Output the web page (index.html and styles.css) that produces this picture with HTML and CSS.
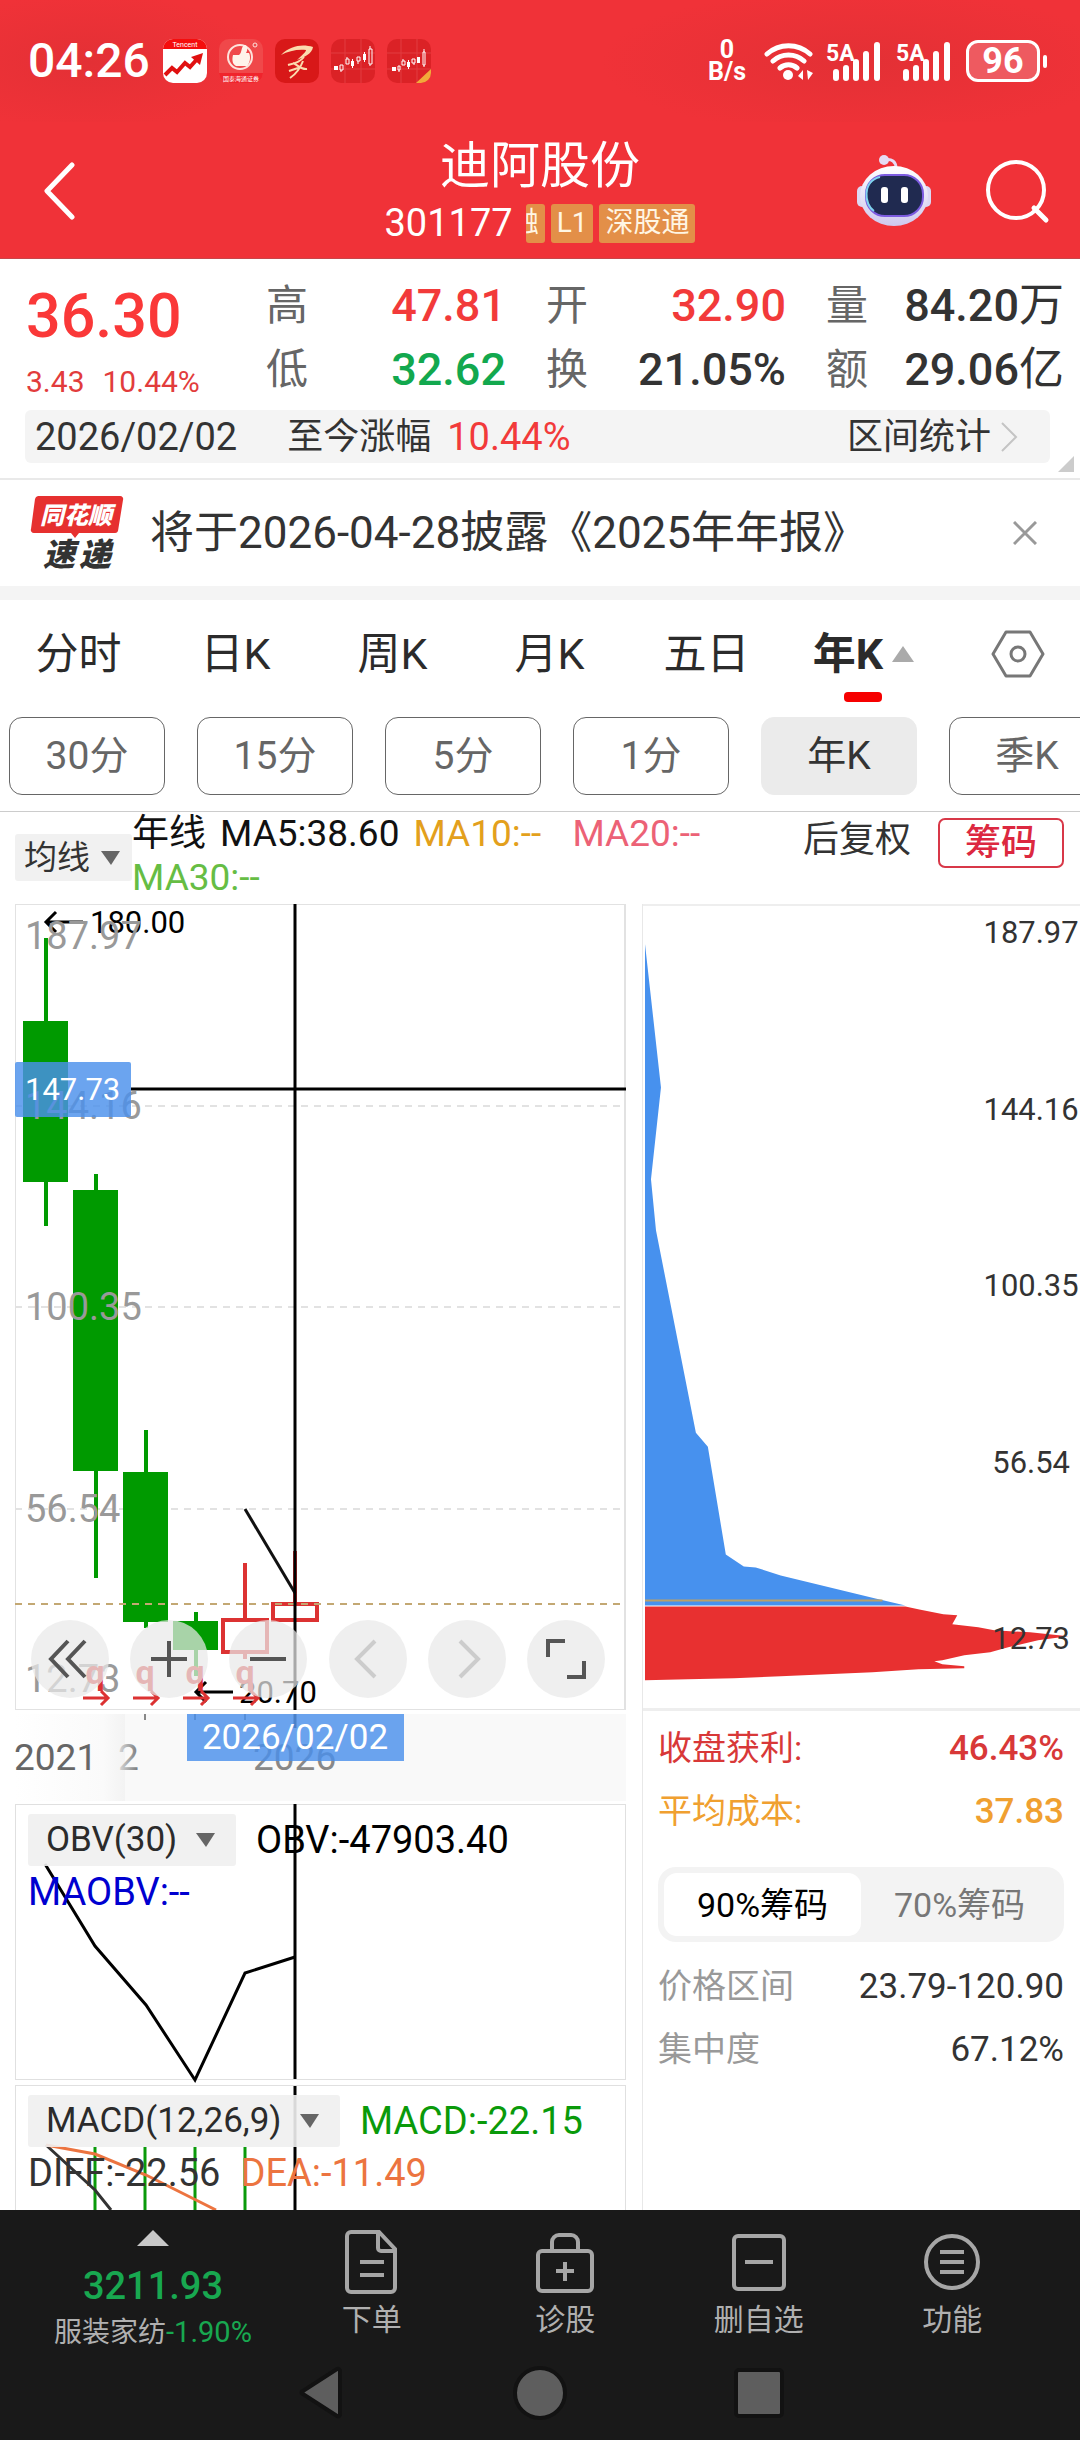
FILE: index.html
```html
<!DOCTYPE html>
<html lang="zh-CN">
<head>
<meta charset="utf-8">
<meta name="viewport" content="width=device-width, initial-scale=1">
<title>迪阿股份 301177</title>
<link rel="stylesheet" href="styles.css">
</head>
<body>
<header class="top">
  <div class="status">
    <time class="clock">04:26</time>
    <div class="apps">
      <svg class="app" viewBox="0 0 44 44" aria-hidden="true">
        <rect width="44" height="44" rx="10" fill="#fff"/>
        <path d="M0 10a10 10 0 0 1 10-10h24a10 10 0 0 1 10 10z" fill="#f50d0d"/>
        <text x="22" y="8" text-anchor="middle" font-size="7" fill="#fff">Tencent</text>
        <path d="M2 36l7-7 5 4 8-9 5 4 9-10" fill="none" stroke="#e01010" stroke-width="4"/>
        <path d="M28 18l12-4-3 12z" fill="#e01010"/>
      </svg>
      <svg class="app" viewBox="0 0 44 44" aria-hidden="true">
        <rect width="44" height="44" rx="10" fill="#f0484a"/>
        <path d="M0 34h44a10 10 0 0 1-10 10H10A10 10 0 0 1 0 34z" fill="#f0242c"/>
        <circle cx="21" cy="18" r="12" fill="none" stroke="#fde3dc" stroke-width="2"/>
        <path d="M14 16h6c3-2 2-8 5-10 4-1 4 5 2 8h3c2 4 1 10-2 13H17c-4-2-4-7-3-11z" fill="#fff3ea"/>
        <circle cx="36" cy="6" r="2" fill="none" stroke="#fde3dc" stroke-width="1"/>
        <text x="22" y="42" text-anchor="middle" font-size="6" fill="#fff">国泰海通证券</text>
      </svg>
      <svg class="app" viewBox="0 0 44 44" aria-hidden="true">
        <rect width="44" height="44" rx="10" fill="#d81818"/>
        <path d="M6 16c10-10 22-11 32-8-1 7-9 10-16 13 6-6 9-8 9-10-8-1-18 1-25 5z" fill="#fbdcae"/>
        <path d="M13 26c7-2 12-3 16-8M14 32l12-4M28 22c-3 8-7 13-13 17M18 24c5 2 8 7 14 6" fill="none" stroke="#fbdcae" stroke-width="2"/>
      </svg>
      <svg class="app" viewBox="0 0 44 44" aria-hidden="true">
        <rect width="44" height="44" rx="10" fill="#db2226"/>
        <path d="M0 14h44M0 30h44M14 0v44M30 0v44" stroke="#e23c40"/>
        <g fill="#fff"><path d="M3 27h4v4H3zM20 22h3v5h-3zM32 15h3v6h-3zM21 20h1v9h-1zM33 13h1v10h-1z"/></g>
        <g fill="none" stroke="#fff"><path d="M9 26h3v5H9zM15 20h3v5h-3zM26 18h3v4h-3zM38 10h3v15h-3zM10 31v2M16 18v2M27 22v3M39 7v3M39 25v2"/></g>
      </svg>
      <svg class="app" viewBox="0 0 44 44" aria-hidden="true">
        <rect width="44" height="44" rx="10" fill="#db2226"/>
        <path d="M0 14h44M0 30h44M14 0v44M30 0v44" stroke="#e23c40"/>
        <g fill="#fff"><path d="M5 28h4v4H5zM20 23h3v5h-3zM30 18h3v6h-3zM21 21h1v9h-1z"/></g>
        <g fill="none" stroke="#fff"><path d="M11 27h2v4h-2zM15 22h3v4h-3zM25 20h3v4h-3zM36 13h2v13h-2zM12 31v2M16 20v2M27 24v2M37 10v3M37 26v2"/></g>
        <path d="M44 30v4a10 10 0 0 1-10 10h-5z" fill="#f2a93a"/>
      </svg>
    </div>
    <div class="rate"><span>0</span><span>B/s</span></div>
    <svg class="wifi" viewBox="0 0 50 40" aria-hidden="true">
      <g fill="none" stroke="#fff" stroke-width="5" stroke-linecap="round">
        <path d="M3 13a32 32 0 0 1 43 0M9 20a23 23 0 0 1 31 0M16 27a13 13 0 0 1 17 0"/>
      </g>
      <circle cx="24" cy="34" r="5" fill="#fff"/>
      <path d="M34 35l5-6v10zM43 29l6 3-5 7z" fill="#fff"/>
    </svg>
    <svg class="signal" viewBox="0 0 56 40" aria-hidden="true">
      <text x="0" y="20" font-size="23" font-weight="700" fill="#fff">5A</text>
      <path d="M10 31v6M20 27v10M30 21v16M40 13v24M51 4v33" stroke="#fff" stroke-width="6" stroke-linecap="round"/>
    </svg>
    <svg class="signal" viewBox="0 0 56 40" aria-hidden="true">
      <text x="0" y="20" font-size="23" font-weight="700" fill="#fff">5A</text>
      <path d="M10 31v6M20 27v10M30 21v16M40 13v24M51 4v33" stroke="#fff" stroke-width="6" stroke-linecap="round"/>
    </svg>
    <div class="battery"><span>96</span><i></i></div>
  </div>
  <div class="titlebar">
    <button class="back" aria-label="返回"><svg viewBox="0 0 32 58"><path d="M29 3L4 29l25 26" fill="none" stroke="#fff" stroke-width="5" stroke-linecap="round" stroke-linejoin="round"/></svg></button>
    <div class="name">
      <h1>迪阿股份</h1>
      <div class="code"><span>301177</span><div class="badges"><b class="cut"><span>融</span></b><b>L1</b><b>深股通</b></div></div>
    </div>
    <div class="tools">
      <button aria-label="助手"><svg width="76" height="72" viewBox="0 0 76 72">
        <defs><linearGradient id="rb" x1="0" y1="0" x2="0" y2="1"><stop offset="0" stop-color="#fff"/><stop offset="1" stop-color="#cfc8ee"/></linearGradient></defs>
        <circle cx="28" cy="5" r="5" fill="#e6dcf4"/><path d="M28 5c8-2 12 2 12 8" fill="none" stroke="#e6dcf4" stroke-width="3"/>
        <rect x="1" y="31" width="10" height="21" rx="5" fill="#dcd8f4"/><rect x="65" y="31" width="10" height="21" rx="5" fill="#dcd8f4"/>
        <ellipse cx="38" cy="41" rx="34" ry="30" fill="url(#rb)"/>
        <rect x="10" y="20" width="57" height="41" rx="19" fill="#202a50" stroke="#7c5be0" stroke-width="2"/>
        <path d="M24 22c-18 4-16 28-6 34" fill="none" stroke="#7fd4ee" stroke-width="2"/>
        <rect x="25" y="32" width="7" height="16" rx="3" fill="#fff"/><rect x="45" y="32" width="7" height="16" rx="3" fill="#fff"/>
      </svg></button>
      <button aria-label="搜索"><svg width="66" height="66" viewBox="0 0 66 66"><circle cx="32" cy="32" r="28" fill="none" stroke="#fff" stroke-width="4"/><path d="M50 50l12 12" stroke="#fff" stroke-width="5" stroke-linecap="round"/></svg></button>
    </div>
  </div>
</header>

<section class="quote">
  <div class="figures">
    <div class="price"><strong>36.30</strong><p><span>3.43</span><span>10.44%</span></p></div>
    <dl>
      <div><dt>高</dt><dd class="up">47.81</dd></div>
      <div><dt>开</dt><dd class="up">32.90</dd></div>
      <div><dt>量</dt><dd>84.20<span>万</span></dd></div>
      <div><dt>低</dt><dd class="down">32.62</dd></div>
      <div><dt>换</dt><dd>21.05%</dd></div>
      <div><dt>额</dt><dd>29.06<span>亿</span></dd></div>
    </dl>
  </div>
  <div class="period">
    <span class="num">2026/02/02</span>
    <span class="since">至今涨幅</span>
    <span class="num up">10.44%</span>
    <button>区间统计<svg width="18" height="32" viewBox="0 0 18 32"><path d="M2 2l14 14L2 30" fill="none" stroke="#c4c4c4" stroke-width="2"/></svg></button>
  </div>
  <svg class="corner" width="16" height="16" viewBox="0 0 16 16" aria-hidden="true"><path d="M16 0v16H0z" fill="#ccc"/></svg>
</section>

<section class="notice">
  <div class="brand">
    <svg viewBox="0 0 94 44" aria-hidden="true"><path d="M8 1h82a3 3 0 0 1 3 4l-5 31a3 3 0 0 1-3 2H49l-4 5-4-5H4a3 3 0 0 1-3-4L5 4a4 4 0 0 1 3-3z" fill="#e6302f"/><text x="46" y="29" text-anchor="middle" font-size="24" font-style="italic" font-weight="900" fill="#fff">同花顺</text></svg>
    <p><span>速</span><span>递</span></p>
  </div>
  <a href="#report">将于2026-04-28披露《2025年年报》</a>
  <button aria-label="关闭"><svg width="24" height="24" viewBox="0 0 24 24"><path d="M1 1l22 22M23 1L1 23" stroke="#999" stroke-width="3"/></svg></button>
</section>

<nav class="tabs">
  <button>分时</button><button>日K</button><button>周K</button><button>月K</button><button>五日</button>
  <button class="on">年K<svg width="22" height="16" viewBox="0 0 22 16"><path d="M11 0l11 16H0z" fill="#aaa"/></svg></button>
  <button class="settings" aria-label="设置"><svg width="54" height="48" viewBox="0 0 54 48"><path d="M15 2h24l13 22-13 22H15L2 24z" fill="none" stroke="#777" stroke-width="3" stroke-linejoin="round"/><circle cx="27" cy="24" r="7" fill="none" stroke="#777" stroke-width="3"/></svg></button>
</nav>
<div class="scales">
  <button>30分</button><button>15分</button><button>5分</button><button>1分</button><button class="on">年K</button><button>季K</button>
</div>

<div class="averages">
  <label class="pick"><select aria-label="主图指标"><option>均线</option></select><svg width="19" height="14" viewBox="0 0 19 14"><path d="M0 0h19l-9 14z" fill="#666"/></svg></label>
  <p><span>年线</span><span>MA5:38.60</span><span class="ma ma10">MA10:--</span><span class="ma ma20">MA20:--</span><span class="ma ma30">MA30:--</span></p>
  <button class="plain">后复权</button>
  <button class="chip">筹码</button>
</div>

<main class="charts">
  <div class="left">
    <div class="kline">
      <svg viewBox="15 904 611 806">
        <rect x="15" y="904" width="610" height="806" fill="none" stroke="#e2e2e2" stroke-width="2"/>
        <g stroke="#e2e2e2" stroke-width="2" stroke-dasharray="7 6"><path d="M15 1106h611M15 1307h611M15 1509h611"/></g>
        <g fill="#009a00">
          <path d="M44 938h4v288h-4zM23 1021h45v161H23z"/>
          <path d="M94 1174h4v404h-4zM73 1190h45v281H73z"/>
          <path d="M144 1430h4v198h-4zM123 1472h45v150h-45z"/>
          <path d="M194 1612h4v64h-4zM173 1621h45v29h-45z"/>
        </g>
        <g fill="none" stroke="#dc3232">
          <path d="M223 1620h44v32h-44z" stroke-width="4"/><path d="M245 1563v55M245 1653v6M295 1551v52" stroke-width="4"/>
          <path d="M273 1604h44v16h-44z" stroke-width="4"/>
        </g>
        <path d="M15 1604h611" stroke="#c3a873" stroke-width="2" stroke-dasharray="7 6"/>
        <path d="M245 1509l50 84" stroke="#111" stroke-width="3"/>
        <path d="M46 922h37M56 912l-10 10 10 10" fill="none" stroke="#000" stroke-width="3"/>
        <text x="90" y="933" class="mark">180.00</text>
        <path d="M196 1692h37M206 1682l-10 10 10 10" fill="none" stroke="#000" stroke-width="3"/>
        <text x="239" y="1703" class="mark">20.70</text>
        <g class="scale"><text x="25" y="949">187.97</text><text x="25" y="1119">144.16</text><text x="25" y="1320">100.35</text><text x="25" y="1522">56.54</text><text x="25" y="1692">12.73</text></g>
        <g class="event"><text x="95" y="1684">q</text><text x="145" y="1684">q</text><text x="195" y="1684">q</text><text x="245" y="1684">q</text></g>
        <path d="M83 1698h25M101 1691l7 7-7 7M133 1698h25M151 1691l7 7-7 7M183 1698h25M201 1691l7 7-7 7M233 1698h25M251 1691l7 7-7 7" fill="none" stroke="#dc3232" stroke-width="3"/>
        <path d="M295 904v806M131 1089h495" stroke="#000" stroke-width="3"/>
        <rect x="15" y="1062" width="116" height="55" rx="2" fill="#4a90eb" fill-opacity=".82"/>
        <text x="25" y="1100" class="cursor">147.73</text>
      </svg>
      <div class="controls">
        <button aria-label="最早"><svg viewBox="0 0 78 78"><path d="M37 21L20 39l17 18M54 21L37 39l17 18"/></svg></button>
        <button aria-label="放大"><svg viewBox="0 0 78 78"><path d="M39 21v36M21 39h36"/></svg></button>
        <button aria-label="缩小"><svg viewBox="0 0 78 78"><path d="M21 39h36"/></svg></button>
        <button aria-label="前一根" disabled><svg viewBox="0 0 78 78"><path d="M46 21L28 39l18 18"/></svg></button>
        <button aria-label="后一根" disabled><svg viewBox="0 0 78 78"><path d="M32 21l18 18-18 18"/></svg></button>
        <button aria-label="全屏"><svg viewBox="0 0 78 78"><path d="M21 37V21h17M57 41v16H40"/></svg></button>
      </div>
    </div>
    <svg class="years" viewBox="15 1710 611 94">
      <defs><linearGradient id="fade"><stop offset="0" stop-color="#fff"/><stop offset=".8" stop-color="#fafafa"/><stop offset="1" stop-color="#f3f3f3"/></linearGradient>
      <linearGradient id="ink"><stop offset="0" stop-color="#ddd"/><stop offset="1" stop-color="#777"/></linearGradient></defs>
      <rect x="125" y="1714" width="501" height="87" fill="#f9f9f9"/>
      <rect x="15" y="1714" width="110" height="87" fill="url(#fade)"/>
      <path d="M145 1714v6M195 1714v6M245 1714v6" stroke="#888" stroke-width="2"/>
      <text x="14" y="1770" fill="#666">2021</text><text x="118" y="1770" fill="url(#ink)">2</text><text x="253" y="1770" fill="#888">2026</text>
      <rect x="187" y="1714" width="217" height="47" fill="#4a90eb" fill-opacity=".82"/>
      <path d="M295 1714v14" stroke="#4a80c8" stroke-width="3"/>
      <text x="295" y="1749" text-anchor="middle" class="date">2026/02/02</text>
    </svg>
    <div class="sub obv">
      <svg viewBox="15 1804 611 275"><path d="M45 1864l50 82 51 59 49 75 50-107 50-16" fill="none" stroke="#000" stroke-width="3"/><path d="M295 1804v275" stroke="#000" stroke-width="3"/></svg>
      <div class="legend">
        <label class="pick"><select aria-label="副图指标一"><option>OBV(30)</option></select><svg width="19" height="14" viewBox="0 0 19 14"><path d="M0 0h19l-9 14z" fill="#666"/></svg></label>
        <span>OBV:-47903.40</span>
      </div>
      <div class="legend"><span class="blue">MAOBV:--</span></div>
    </div>
    <div class="sub macd">
      <svg viewBox="15 2085 611 125">
        <path d="M95 2147v63M145 2147v63M195 2147v63M245 2147v63" stroke="#0a9a0a" stroke-width="3"/>
        <path d="M46 2145l49 45 16 20" fill="none" stroke="#333" stroke-width="3"/>
        <path d="M46 2145l49 9 51 21 50 25 20 10" fill="none" stroke="#ec7440" stroke-width="3"/>
        <path d="M295 2085v125" stroke="#000" stroke-width="3"/>
      </svg>
      <div class="legend">
        <label class="pick"><select aria-label="副图指标二"><option>MACD(12,26,9)</option></select><svg width="19" height="14" viewBox="0 0 19 14"><path d="M0 0h19l-9 14z" fill="#666"/></svg></label>
        <span class="green">MACD:-22.15</span>
      </div>
      <div class="legend"><span class="ink">DIFF:-22.56</span><span class="orange">DEA:-11.49</span></div>
    </div>
  </div>

  <aside class="chips">
    <svg viewBox="642 904 438 806">
      <path d="M642 905h438" stroke="#eee" stroke-width="2"/>
      <path d="M644 944l16 144-10 92 5 51 40 203 12 14 18 108 18 12 12 1 25 8 95 23 30 7H644z" fill="#4791ee"/>
      <path d="M644 1602h238" stroke="#b9a06a" stroke-width="2"/>
      <path d="M644 1608h261l14 3 24 5 14 1-5 9 26 3 16 3 36 2 38 4-30 4-30 7-18 5-26 3-22 5-8 1 8 3 22 2v2l-46 1-46 3-46 2-46 2-47 2-46 1-43 1z" fill="#e83030"/>
      <g class="axis"><text x="1031" y="943">187.97</text><text x="1031" y="1120">144.16</text><text x="1031" y="1297">100.35</text><text x="1031" y="1474">56.54</text><text x="1031" y="1651">12.73</text></g>
    </svg>
    <div class="detail">
      <p class="red"><span>收盘获利:</span><b>46.43%</b></p>
      <p class="amber"><span>平均成本:</span><b>37.83</b></p>
      <div class="segment"><button class="on">90%筹码</button><button>70%筹码</button></div>
      <p class="grey"><span>价格区间</span><b>23.79-120.90</b></p>
      <p class="grey"><span>集中度</span><b>67.12%</b></p>
    </div>
  </aside>
</main>

<footer class="bottom">
  <nav class="actions">
    <a href="#sector" class="index"><svg width="32" height="16" viewBox="0 0 32 16"><path d="M16 0l16 16H0z" fill="#c8c8c8"/></svg><strong>3211.93</strong><span>服装家纺<em>-1.90%</em></span></a>
    <button><svg viewBox="0 0 64 64"><path d="M11 2h28l16 17v39a4 4 0 0 1-4 4H11a4 4 0 0 1-4-4V6a4 4 0 0 1 4-4zM38 3v15a3 3 0 0 0 3 3h13M20 32h24M20 45h24"/></svg>下单</button>
    <button><svg viewBox="0 0 64 64"><path d="M9 21h46a4 4 0 0 1 4 4v32a4 4 0 0 1-4 4H9a4 4 0 0 1-4-4V25a4 4 0 0 1 4-4zM19 21v-9a7 7 0 0 1 7-7h12a7 7 0 0 1 7 7v9M32 32v19M23 41h18"/></svg>诊股</button>
    <button><svg viewBox="0 0 64 64"><path d="M11 6h42a4 4 0 0 1 4 4v45a4 4 0 0 1-4 4H11a4 4 0 0 1-4-4V10a4 4 0 0 1 4-4zM18 32h28"/></svg>删自选</button>
    <button><svg viewBox="0 0 64 64"><circle cx="32" cy="32" r="26"/><path d="M20 22h24M20 32h24M20 42h24"/></svg>功能</button>
  </nav>
  <div class="system">
    <button aria-label="后退"><svg width="50" height="60" viewBox="0 0 50 60"><path d="M44 8v44a2 2 0 0 1-3 1L7 31a1 1 0 0 1 0-3L41 6a2 2 0 0 1 3 2z"/></svg></button>
    <button aria-label="主屏幕"><svg width="60" height="60" viewBox="0 0 60 60"><circle cx="30" cy="30" r="25"/></svg></button>
    <button aria-label="最近任务"><svg width="60" height="60" viewBox="0 0 60 60"><rect x="7" y="7" width="46" height="46" rx="3"/></svg></button>
  </div>
</footer>
</body>
</html>
```
FILE: styles.css
```css
* { box-sizing: border-box; }
body {
  margin: 0;
  background: #fff;
  color: #333;
  font-family: Roboto, "Noto Sans CJK SC", sans-serif;
  font-size: 36px;
  line-height: 44px;
  overflow-x: hidden;
}
h1, p, dl, dd { margin: 0; }
svg { display: block; flex: none; }
button, select { font: inherit; color: inherit; background: none; border: 0; padding: 0; margin: 0; }
select { appearance: none; }
a { color: inherit; text-decoration: none; }
em, i { font-style: normal; }
.up { color: #f23a3a; }
.down { color: #12a84e; }

/* status bar and title */
.top { background: #f03238; color: #fff; height: 259px; display: flex; flex-direction: column; border-bottom: 1px solid #c8464a; }
.status {
  display: flex; align-items: center; height: 122px; padding: 0 33px 0 28px;
  background:
    radial-gradient(ellipse 170px 70px at 90px 62px, #e33035, transparent),
    radial-gradient(ellipse 260px 74px at 860px 62px, #e33035, transparent);
}
.clock { font-size: 48px; font-weight: 500; }
.apps { display: flex; gap: 12px; margin: 0 auto 0 13px; }
.app { width: 44px; height: 44px; }
.rate { display: flex; flex-direction: column; align-items: center; font-size: 25px; font-weight: 700; line-height: 22px; margin-right: 18px; }
.wifi { width: 50px; height: 40px; margin-right: 12px; }
.signal { width: 56px; height: 40px; margin-right: 14px; overflow: visible; }
.battery { display: flex; align-items: center; gap: 3px; }
.battery span { width: 74px; height: 42px; border: 3px solid #fff; border-radius: 12px; background: #ee5a60; font-size: 36px; line-height: 36px; font-weight: 700; text-align: center; }
.battery i { width: 4px; height: 13px; border-radius: 2px; background: #fff; }
.titlebar { display: grid; grid-template-columns: 1fr auto 1fr; align-items: center; flex: 1; padding: 2px 30px 0; }
.back { justify-self: start; margin-left: 13px; }
.back svg { width: 32px; height: 58px; }
.name { display: flex; flex-direction: column; align-items: center; }
h1 { font-size: 50px; font-weight: 400; line-height: 64px; }
.code { display: flex; align-items: center; gap: 13px; font-size: 38px; line-height: 50px; }
.badges { display: flex; gap: 6px; }
.badges b { display: block; height: 39px; padding: 0 6px; border-radius: 3px; background: #e38f48; color: #fff6e4; font-size: 28px; font-weight: 400; line-height: 38px; }
.badges .cut { width: 19px; padding: 0; overflow: hidden; display: flex; justify-content: flex-end; }
.badges .cut span { margin-right: 6px; }
.tools { display: flex; align-items: center; gap: 52px; justify-self: end; }

/* price block */
.quote { position: relative; padding: 15px 16px; border-bottom: 2px solid #e9e9e9; }
.figures { display: grid; grid-template-columns: 240px 1fr; height: 128px; }
.price { padding: 6px 0 0 10px; color: #fa3838; }
.price strong { display: block; font-size: 61px; font-weight: 500; line-height: 72px; }
.price p { display: flex; gap: 18px; font-size: 30px; line-height: 36px; margin-top: 12px; color: #e23c3c; }
dl { display: grid; grid-template-columns: 240px 240px 1fr; column-gap: 40px; padding-left: 10px; }
dl div { display: flex; justify-content: space-between; align-items: center; line-height: 64px; height: 64px; }
dt { font-size: 42px; color: #666; }
dd { font-size: 45px; font-weight: 500; white-space: nowrap; }
dd span { font-weight: 400; }
.period { display: flex; align-items: center; height: 53px; margin: 8px 14px 0 9px; padding: 0 32px 0 10px; border-radius: 6px; background: #f4f4f4; }
.num { font-size: 38px; }
.since { margin: 0 16px 0 50px; }
.period button { display: flex; align-items: center; gap: 9px; margin-left: auto; }
.corner { position: absolute; right: 6px; bottom: 6px; }

/* announcement */
.notice { display: flex; align-items: center; height: 120px; padding: 0 43px 0 30px; border-bottom: 14px solid #f4f4f4; }
.brand { width: 94px; }
.brand p { display: flex; justify-content: center; gap: 4px; font-size: 32px; font-style: italic; font-weight: 900; line-height: 32px; }
.notice a { font-size: 44px; margin-left: 26px; white-space: nowrap; }
.notice button { margin-left: auto; }

/* period tabs */
.tabs { display: grid; grid-template-columns: repeat(6, 1fr) 138px; align-items: center; height: 108px; font-size: 43px; color: #2b2b2b; }
.tabs button { display: flex; align-items: center; justify-content: center; gap: 9px; position: relative; height: 100px; }
.tabs .on { font-weight: 700; }
.tabs .on::after { content: ""; position: absolute; left: calc(50% - 20px); bottom: 2px; width: 38px; height: 10px; border-radius: 4px; background: #f60000; }
.tabs .settings { justify-content: flex-end; padding-right: 35px; }
.scales { display: flex; gap: 32px; padding: 9px 0 16px 9px; overflow: hidden; border-bottom: 1px solid #ccc; }
.scales button { flex: none; width: 156px; height: 78px; border: 1px solid #666; border-radius: 13px; font-size: 39px; color: #666; }
.scales .on { background: #ebebeb; border-color: #ebebeb; color: #333; }

/* moving averages */
.averages { display: flex; align-items: flex-start; height: 92px; padding-right: 16px; padding-left: 15px; }
.pick { display: flex; align-items: center; background: #f0f0f0e6; border-radius: 3px; }
.averages .pick { height: 47px; margin-top: 22px; padding: 0 12px 0 9px; gap: 11px; font-size: 33px; }
.averages p { display: flex; flex-wrap: wrap; align-content: flex-start; column-gap: 14px; flex: 1; color: #111; font-size: 37px; }
.ma { min-width: 145px; }
.ma10 { color: #e3a01c; }
.ma20 { color: #ec6276; }
.ma30 { color: #66bd44; }
.plain { margin: 6px 27px 0 0; }
.chip { width: 126px; height: 50px; margin-top: 6px; border: 2px solid #d83848; border-radius: 7px; color: #dc2840; font-weight: 500; }

/* charts */
.charts { display: grid; grid-template-columns: 611fr 438fr; gap: 16px; padding-left: 15px; align-items: stretch; }
.kline { position: relative; }
.kline > svg, .years, .chips > svg { width: 100%; height: auto; }
.mark { font-size: 31px; fill: #000; }
.scale { font-size: 38px; fill: #999; }
.event { font-size: 34px; font-weight: 700; fill: #dc3232; text-anchor: middle; }
.cursor { font-size: 31px; fill: #fff; }
.years { font-size: 37px; }
.date { font-size: 35px; fill: #fff; }
.axis { font-size: 31px; fill: #333; text-anchor: middle; }
.controls { position: absolute; left: 16px; right: 21px; bottom: 12px; display: flex; justify-content: space-between; }
.controls button { width: 78px; height: 78px; border-radius: 50%; background: #e9e9e9b8; }
.controls svg { width: 78px; height: 78px; fill: none; stroke: #555; stroke-width: 4; }
.controls button:disabled svg { stroke: #ccc; }
.sub { position: relative; border: 1px solid #e0e0e0; padding: 9px 0 0 12px; font-size: 38px; }
.sub > svg { position: absolute; left: -1px; top: -1px; width: calc(100% + 2px); overflow: visible; }
.obv { height: 276px; }
.macd { height: 125px; margin-top: 5px; border-bottom: 0; overflow: hidden; }
.legend { position: relative; display: flex; align-items: center; gap: 20px; height: 52px; white-space: nowrap; color: #000; }
.legend .pick { height: 52px; padding: 0 21px 0 18px; gap: 18px; font-size: 35px; color: #2b2b2b; }
.legend .blue { color: #0000d0; }
.legend .green { color: #0a9a0a; }
.legend .ink { color: #333; }
.legend .orange { color: #ec7440; }

/* chip distribution */
.chips { border-left: 1px solid #e8e8e8; }
.detail { border-top: 3px solid #eee; padding: 6px 16px 0 15px; font-size: 34px; }
.detail p { display: flex; justify-content: space-between; line-height: 63px; }
.detail b { font-size: 35px; font-weight: 500; }
.red { color: #d83838; }
.amber { color: #f0a030; }
.grey { color: #999; }
.grey b { color: #333; font-weight: 400; }
.segment { display: flex; padding: 6px; margin: 24px 0 13px; border-radius: 18px; background: #f3f3f3; }
.segment button { flex: 1; height: 63px; border-radius: 13px; color: #777; }
.segment .on { background: #fff; color: #000; }

/* bottom bars */
.bottom { background: #191919; color: #b0b0b0; }
.actions { display: grid; grid-template-columns: 244px repeat(4, 1fr); padding: 20px 31px 0; height: 146px; }
.actions a { display: flex; flex-direction: column; align-items: center; font-size: 28px; line-height: 40px; white-space: nowrap; }
.index strong { margin-top: 18px; font-size: 38px; font-weight: 500; color: #18a850; line-height: 44px; }
.index em { color: #18a850; font-size: 29px; }
.index span { margin-top: 4px; }
.actions button { display: flex; flex-direction: column; align-items: center; gap: 4px; font-size: 30px; line-height: 44px; }
.actions button svg { width: 64px; height: 64px; fill: none; stroke: #a6a6a6; stroke-width: 4; }
.system { display: grid; grid-template-columns: 60px 60px 60px; justify-content: center; gap: 159px; height: 84px; align-items: start; }
.system button { display: flex; justify-content: center; padding-top: 7px; }
.system svg { fill: #5e5e5e; stroke: #121212; stroke-width: 4; }
```
